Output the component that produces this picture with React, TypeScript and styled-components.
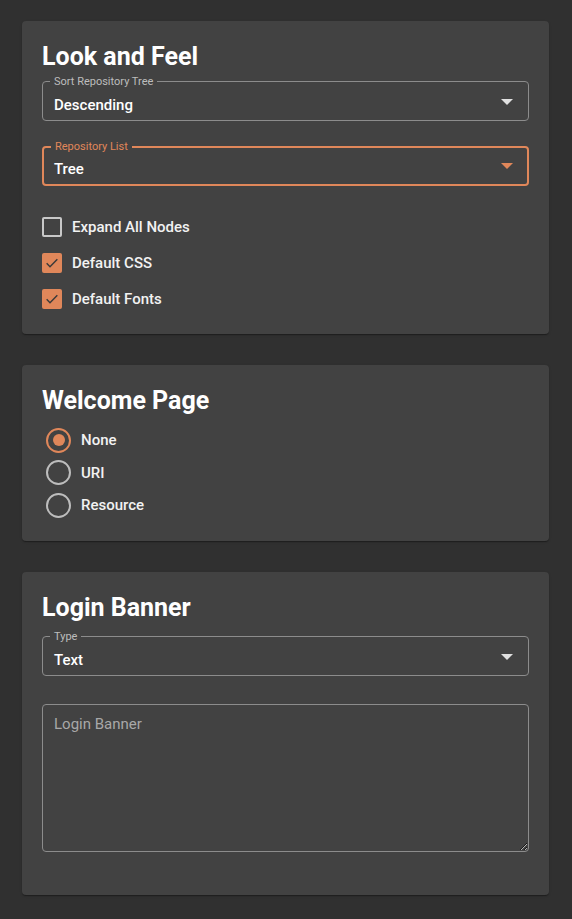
import React, { useState } from "react";
import styled, { createGlobalStyle } from "styled-components";

const accent = "#e0875a";

const GlobalStyle = createGlobalStyle`
    html, body {
        margin: 0;
        padding: 0;
        background: #303030;
    }
    body {
        font-family: Roboto, "Noto Sans", "Liberation Sans", sans-serif;
        color: #fff;
    }
`;

const Page = styled.div`
    display: flex;
    flex-direction: column;
    gap: 31px;
    padding: 21px 23px 23px 22px;
`;

const Card = styled.section`
    background: #424242;
    border-radius: 4px;
    padding: 20px 20px ${(props: { bottom: number }) => props.bottom}px;
    box-shadow: 0 2px 1px -1px rgba(0, 0, 0, 0.2), 0 1px 1px 0 rgba(0, 0, 0, 0.14),
        0 1px 3px 0 rgba(0, 0, 0, 0.12);
`;

const Title = styled.h2<{ gap?: number }>`
    margin: 0 0 ${(p) => p.gap ?? 8}px;
    font-size: 25px;
    line-height: 32px;
    font-weight: 700;
    color: #fff;
`;

type FieldProps = { focused?: boolean };

const Field = styled.div<FieldProps>`
    position: relative;
    height: 40px;
    box-sizing: border-box;
    border-radius: 4px;
    border: ${(p) => (p.focused ? `2px solid ${accent}` : "1px solid #8c8c8c")};
    padding: ${(p) => (p.focused ? "12px 10px 6px" : "14px 11px 6px")};
    display: flex;
    align-items: flex-start;
    cursor: pointer;
`;

const FieldLabel = styled.span<FieldProps>`
    position: absolute;
    top: ${(p) => (p.focused ? "-7px" : "-6px")};
    left: ${(p) => (p.focused ? "7px" : "7px")};
    padding: 0 4px;
    background: #424242;
    font-size: 11px;
    line-height: 12px;
    color: ${(p) => (p.focused ? accent : "#bdbdbd")};
`;

const FieldValue = styled.span`
    flex: 1;
    font-size: 15px;
    line-height: 18px;
    color: #fff;
    font-weight: 500;
`;

const Caret = styled.span<FieldProps>`
    align-self: center;
    margin-top: -6px;
    margin-right: 4px;
    width: 0;
    height: 0;
    border-left: 6px solid transparent;
    border-right: 6px solid transparent;
    border-top: 6px solid ${(p) => (p.focused ? accent : "#e0e0e0")};
`;

const FieldGap = styled.div<{ size: number }>`
    height: ${(p) => p.size}px;
`;

const CheckList = styled.div`
    display: flex;
    flex-direction: column;
`;

const CheckRow = styled.label`
    display: flex;
    align-items: center;
    gap: 10px;
    height: 36px;
    font-size: 15px;
    font-weight: 500;
    color: #f2f2f2;
    cursor: pointer;
`;

const Box = styled.span<{ checked: boolean }>`
    width: 20px;
    height: 20px;
    box-sizing: border-box;
    border-radius: 2px;
    border: ${(p) => (p.checked ? "none" : "2px solid #c8c8c8")};
    background: ${(p) => (p.checked ? accent : "transparent")};
    display: flex;
    align-items: center;
    justify-content: center;
`;

const RadioList = styled.div`
    display: flex;
    flex-direction: column;
`;

const RadioRow = styled.label`
    display: flex;
    align-items: center;
    gap: 10px;
    height: 32.5px;
    padding-left: 4px;
    font-size: 15px;
    font-weight: 500;
    color: #f2f2f2;
    cursor: pointer;
`;

const RadioDot = styled.span<{ checked: boolean }>`
    width: 25px;
    height: 25px;
    box-sizing: border-box;
    border-radius: 50%;
    border: 2px solid ${(p) => (p.checked ? accent : "#bdbdbd")};
    display: flex;
    align-items: center;
    justify-content: center;

    &::after {
        content: "";
        width: 12px;
        height: 12px;
        border-radius: 50%;
        background: ${(p) => (p.checked ? accent : "transparent")};
    }
`;

const TextArea = styled.textarea`
    display: block;
    width: 100%;
    height: 148px;
    box-sizing: border-box;
    margin: 0;
    padding: 10px 11px;
    border: 1px solid #8c8c8c;
    border-radius: 4px;
    background: transparent;
    color: #fff;
    font-family: Roboto, "Noto Sans", "Liberation Sans", sans-serif;
    font-size: 15px;
    line-height: 18px;
    resize: vertical;
    outline: none;

    &::placeholder {
        color: #a8a8a8;
    }
`;

const Check = () => (
    <svg width="16" height="16" viewBox="0 0 24 24">
        <path
            d="M4 12.5l5 5L20 6.5"
            fill="none"
            stroke="#3a3a3a"
            strokeWidth="2.2"
        />
    </svg>
);

type SelectProps = { label: string; value: string; focused?: boolean };

const Select = ({ label, value, focused }: SelectProps) => (
    <Field focused={focused}>
        <FieldLabel focused={focused}>{label}</FieldLabel>
        <FieldValue>{value}</FieldValue>
        <Caret focused={focused} />
    </Field>
);

const App = () => {
    const [checks, setChecks] = useState([
        { label: "Expand All Nodes", checked: false },
        { label: "Default CSS", checked: true },
        { label: "Default Fonts", checked: true },
    ]);
    const [welcome, setWelcome] = useState("None");

    return (
        <Page>
            <GlobalStyle />
            <Card bottom={17}>
                <Title>Look and Feel</Title>
                <Select label="Sort Repository Tree" value="Descending" />
                <FieldGap size={25} />
                <Select label="Repository List" value="Tree" focused />
                <FieldGap size={23} />
                <CheckList>
                    {checks.map((c, i) => (
                        <CheckRow
                            key={c.label}
                            onClick={() =>
                                setChecks(
                                    checks.map((x, j) =>
                                        j === i ? { ...x, checked: !x.checked } : x
                                    )
                                )
                            }
                        >
                            <Box checked={c.checked}>{c.checked && <Check />}</Box>
                            {c.label}
                        </CheckRow>
                    ))}
                </CheckList>
            </Card>

            <Card bottom={19.5}>
                <Title gap={7}>Welcome Page</Title>
                <RadioList>
                    {["None", "URI", "Resource"].map((opt) => (
                        <RadioRow key={opt} onClick={() => setWelcome(opt)}>
                            <RadioDot checked={welcome === opt} />
                            {opt}
                        </RadioRow>
                    ))}
                </RadioList>
            </Card>

            <Card bottom={43}>
                <Title>Login Banner</Title>
                <FieldGap size={4} />
                <Select label="Type" value="Text" />
                <FieldGap size={28} />
                <TextArea placeholder="Login Banner" />
            </Card>
        </Page>
    );
};

export default App;
